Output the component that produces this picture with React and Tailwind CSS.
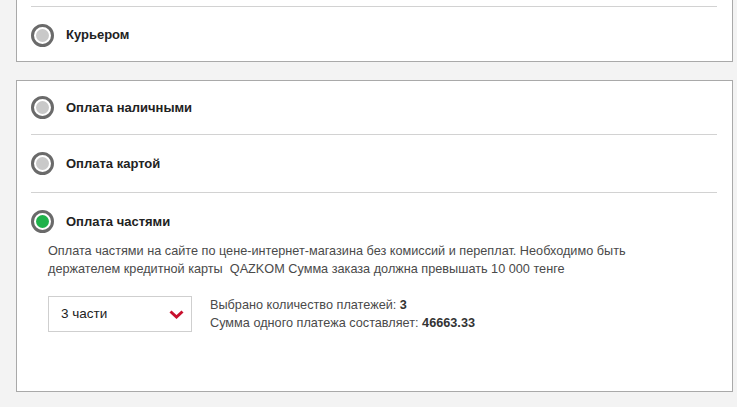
import React, { useState } from 'react';

const Radio = ({ checked }) => (
  <span className="flex h-[23px] w-[23px] shrink-0 items-center justify-center rounded-full border-[3px] border-[#6a6a6a] bg-white">
    <span className={`h-[13px] w-[13px] rounded-full ${checked ? 'bg-[#1fb24a]' : 'bg-[#c9c9c9]'}`} />
  </span>
);

const Option = ({ label, checked, height, onClick }) => (
  <div className={`flex items-center gap-3 pl-[14px] cursor-pointer ${height}`} onClick={onClick}>
    <Radio checked={checked} />
    <span className="text-[13px] font-bold text-[#222]">{label}</span>
  </div>
);

const App = () => {
  const [payment, setPayment] = useState('parts');
  const [parts, setParts] = useState('3');

  return (
    <div className="min-h-[407px] w-[737px] overflow-hidden bg-[#f3f3f3] font-['Liberation_Sans',Arial,sans-serif]">
      {/* delivery panel, top is cut off */}
      <div className="ml-[16px] mr-[4px] -mt-[41px] border border-[#a9a9a9] bg-white">
        <div className="h-[46px]" />
        <div className="ml-[14px] mr-[15px] border-t border-[#d2d2d2]" />
        <Option label="Курьером" checked={false} height="h-[54px] pt-[2px]" />
      </div>

      {/* payment panel */}
      <div className="ml-[16px] mr-[4px] mt-[18px] h-[312px] border border-[#a9a9a9] bg-white">
        <Option label="Оплата наличными" checked={payment === 'cash'} height="h-[53px]" onClick={() => setPayment('cash')} />
        <div className="ml-[14px] mr-[15px] border-t border-[#d2d2d2]" />
        <Option label="Оплата картой" checked={payment === 'card'} height="h-[57px]" onClick={() => setPayment('card')} />
        <div className="ml-[14px] mr-[15px] border-t border-[#d2d2d2]" />
        <div className="pt-[17px]">
          <Option label="Оплата частями" checked={payment === 'parts'} height="h-[23px]" onClick={() => setPayment('parts')} />
        </div>

        <p className="ml-[31px] mt-[9px] w-[620px] text-[12.7px] leading-[18px] text-[#4a4a4a]">
          Оплата частями на сайте по цене-интернет-магазина без комиссий и переплат. Необходимо быть<br />
          держателем кредитной карты&nbsp; QAZKOM Сумма заказа должна превышать 10 000 тенге
        </p>

        <div className="ml-[31px] mt-[18px] flex items-center gap-[18px]">
          <div className="relative h-[36px] w-[144px] border border-[#cfcfcf] bg-white">
            <select
              value={parts}
              onChange={e => setParts(e.target.value)}
              className="h-full w-full appearance-none bg-transparent pl-[12px] text-[13.5px] text-[#222] outline-none"
            >
              <option value="3">3 части</option>
              <option value="6">6 частей</option>
              <option value="12">12 частей</option>
            </select>
            <svg className="pointer-events-none absolute right-[7px] top-[13px]" width="15" height="9" viewBox="0 0 15 9">
              <path d="M1.5 1.5 L7.5 7 L13.5 1.5" fill="none" stroke="#c8102e" strokeWidth="3" />
            </svg>
          </div>
          <div className="text-[12.7px] leading-[18px] text-[#4a4a4a]">
            <div>Выбрано количество платежей: <b className="text-[#333]">{parts}</b></div>
            <div>Сумма одного платежа составляет: <b className="text-[#333]">46663.33</b></div>
          </div>
        </div>
      </div>
    </div>
  );
};

export default App;
